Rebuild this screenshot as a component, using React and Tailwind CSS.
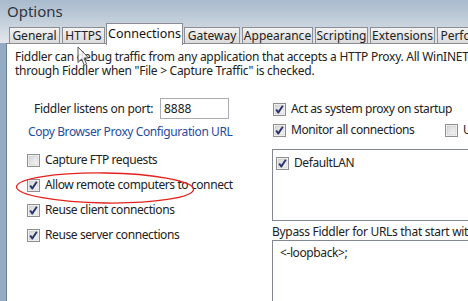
const font = { fontFamily: '"Noto Sans", "Open Sans", sans-serif' };

const CheckBox = ({ checked }) => (
  <svg width="13" height="13" viewBox="0 0 13 13" className="shrink-0">
    <defs>
      <linearGradient id="cbg" x1="0" y1="0" x2="1" y2="1">
        <stop offset="0" stopColor="#d6d6d6" />
        <stop offset="1" stopColor="#f6f6f6" />
      </linearGradient>
    </defs>
    <rect x="0.5" y="0.5" width="12" height="12" fill="#fff" stroke="#8e8f8f" />
    <rect x="2" y="2" width="9" height="9" fill="url(#cbg)" stroke="#c4c4c4" strokeWidth="0.6" />
    {checked && (
      <path d="M3.2 6.4 L5.2 9.6 L9.8 2.8" fill="none" stroke="#28336b" strokeWidth="1.9" strokeLinejoin="round" />
    )}
  </svg>
);

const Check = ({ checked, label, className = "" }) => (
  <div className={`flex items-center h-[16px] gap-[5px] ${className}`}>
    <CheckBox checked={checked} />
    <span className="whitespace-nowrap tracking-[-0.4px]">{label}</span>
  </div>
);

const tabs = [
  { name: "General", w: "w-[51px]" },
  { name: "HTTPS", w: "w-[43px]" },
  { name: "Connections", w: "w-[77px]", active: true },
  { name: "Gateway", w: "w-[56px]" },
  { name: "Appearance", w: "w-[71px]" },
  { name: "Scripting", w: "w-[53px]" },
  { name: "Extensions", w: "w-[65px]" },
  { name: "Performance", w: "w-[80px]" },
];

export default function App() {
  return (
    <div
      className="relative w-[468px] h-[301px] overflow-hidden bg-[#9fb3c8] text-[12px] text-[#222] flex flex-col"
      style={font}
    >
      <div className="h-[43px] shrink-0 bg-gradient-to-b from-[#a8bacd] via-[#c3cfdb] to-[#e4e7eb] flex flex-col">
        <div className="h-[22px] pl-[7px] pt-[1px] flex items-center text-[15px] text-[#2e3640]">Options</div>
        <div className="flex-1 flex items-end pl-[9px] gap-[2px] leading-none">
          {tabs.map((t) =>
            t.active ? (
              <div
                key={t.name}
                className={`${t.w} shrink-0 h-[22px] -ml-[1px] -mr-[1px] bg-white border border-b-0 border-[#898c95] flex items-center justify-center text-[12.5px] text-[#111] relative z-10 translate-y-[1px]`}
              >
                {t.name}
              </div>
            ) : (
              <div
                key={t.name}
                className={`${t.w} shrink-0 h-[17px] bg-gradient-to-b from-[#f3f3f3] to-[#d9d9d9] border border-b-0 border-[#8c8e94] flex items-center justify-center whitespace-nowrap`}
              >
                {t.name}
              </div>
            )
          )}
        </div>
      </div>

      <div className="flex-1 flex">
        <div className="w-[7px] shrink-0 bg-[#93abc4] border-r border-[#6d8097]"></div>
        <div className="flex-1 bg-white border-t border-[#898c95] flex flex-col">
          <div className="pl-[8px] pt-[6px] leading-[14px] whitespace-nowrap tracking-[-0.27px]">
            <div>Fiddler can debug traffic from any application that accepts a HTTP Proxy. All WinINET traffic is routed</div>
            <div>through Fiddler when "File &gt; Capture Traffic" is checked.</div>
          </div>

          <div className="flex flex-1">
            <div className="w-[264px] shrink-0 flex flex-col">
              <div className="mt-[20px] h-[21px] flex items-center">
                <span className="ml-[27px] w-[126px] tracking-[-0.3px]">Fiddler listens on port:</span>
                <div className="w-[69px] h-[21px] border border-[#abadb3] pl-[3px] flex items-center">8888</div>
              </div>
              <div className="mt-[5px] ml-[21px] h-[16px] flex items-center text-[#1f4e9c] tracking-[-0.4px]">
                Copy Browser Proxy Configuration URL
              </div>
              <div className="mt-[12px] ml-[20px] flex flex-col gap-[9px]">
                <Check label="Capture FTP requests" />
                <Check checked label="Allow remote computers to connect" />
                <Check checked label="Reuse client connections" />
                <Check checked label="Reuse server connections" />
              </div>
            </div>

            <div className="flex-1 flex flex-col">
              <Check checked label="Act as system proxy on startup" className="mt-[23px] ml-[2px] gap-[4px]" />
              <div className="mt-[5px] ml-[2px] flex items-center">
                <Check checked label="Monitor all connections" className="w-[172px] gap-[4px]" />
                <Check label="Use PAC Script" className="gap-[4px]" />
              </div>
              <div className="mt-[11px] ml-[1px] w-[220px] h-[72px] border border-[#828790] pt-[5px] pl-[3px]">
                <Check checked label="DefaultLAN" className="gap-[5px]" />
              </div>
              <div className="mt-[4px] ml-[1px] h-[14px] flex items-center whitespace-nowrap tracking-[-0.3px]">
                Bypass Fiddler for URLs that start with:
              </div>
              <div className="mt-[1px] ml-[1px] w-[220px] flex-1 border border-[#828790] border-b-0 pl-[7px] pt-[3px] tracking-[-0.4px]">
                &lt;-loopback&gt;;
              </div>
            </div>
          </div>
        </div>
      </div>

      <svg className="absolute left-[15px] top-[171px]" width="182" height="34" viewBox="0 0 182 34">
        <ellipse cx="90" cy="17" rx="88.5" ry="15" fill="none" stroke="#e3221d" strokeWidth="1.3" transform="rotate(0.8 90 17)" />
      </svg>

      <svg className="absolute left-[77px] top-[46px]" width="14" height="21" viewBox="0 0 14 21">
        <path d="M1 1 L1 16.5 L4.6 13 L7.3 19.2 L9.6 18.2 L7 12.1 L11.8 12.1 Z" fill="#fff" stroke="#3a3a3a" strokeWidth="1" strokeLinejoin="round" opacity="0.85" />
      </svg>
    </div>
  );
}
